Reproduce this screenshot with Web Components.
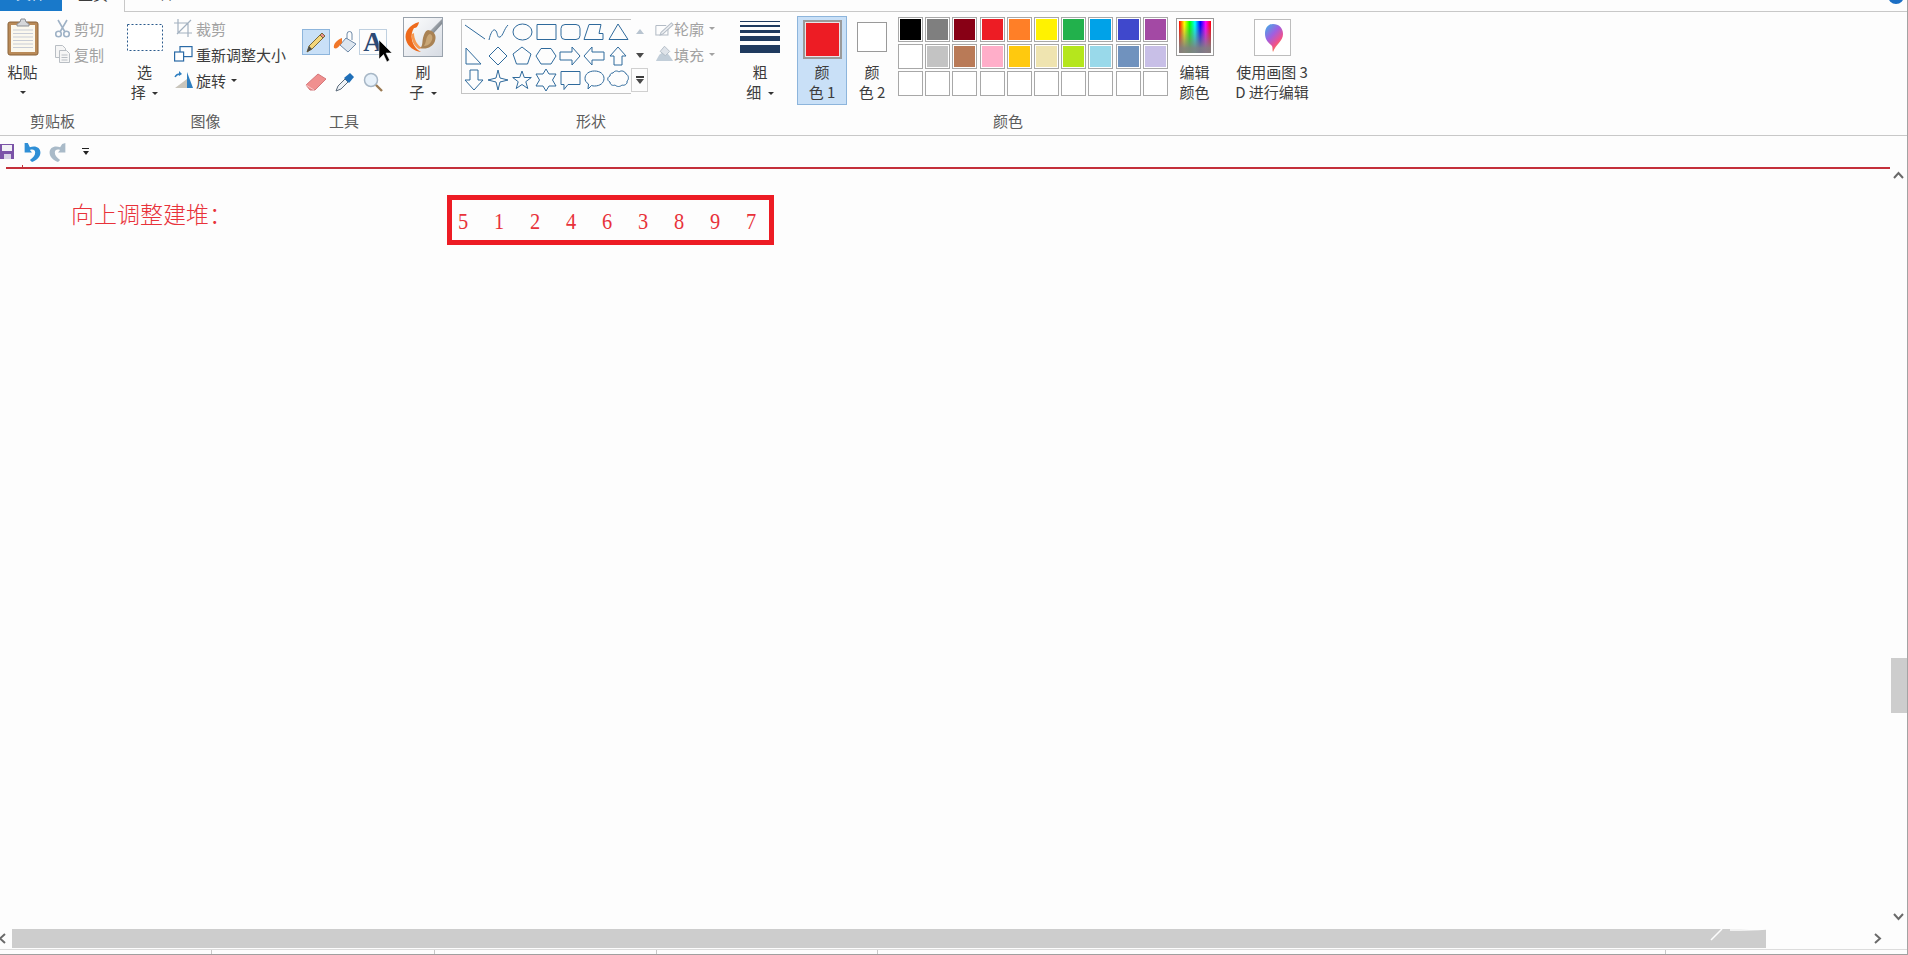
<!doctype html>
<html lang="zh">
<head>
<meta charset="utf-8">
<title>画图</title>
<style>
  html, body { margin: 0; height: 100%; overflow: hidden; background: #fdfdfd; }
  body { font-family: "Noto Sans CJK SC", "Noto Sans", sans-serif; }
</style>
</head>
<body>
<paint-app>
  <paint-tabs></paint-tabs>
  <paint-ribbon>
    <rb-group label="剪贴板" width="120" label-pad="15">
      <rb-big width="45" caret-line="3">
        <svg slot="icon" width="32" height="38" viewBox="0 0 32 38">
          <rect x="1" y="4" width="30" height="33" rx="2" fill="#b98a58" stroke="#8a6238"/>
          <rect x="4" y="7" width="24" height="27" fill="#fbf8ee"/>
          <path d="M6 12h20M6 15.500h20M6 19h20M6 22.500h20M6 26h20M6 29.500h20" stroke="#c9cdd6"/>
          <path d="M10 6l3-2 1-3h4l1 3 3 2v2H10z" fill="#d5d7da" stroke="#8c8f94"/>
        </svg>
        粘贴
      </rb-big>
      <rb-col style="margin-left:10px">
        <rb-small disabled>
          <svg slot="icon" width="15" height="19" viewBox="0 0 15 19" fill="none" stroke="#9fb2c6" stroke-width="1.600">
            <path d="M3 1l7 12M12 1L5 13"/><circle cx="3.500" cy="15" r="2.800"/><circle cx="11.500" cy="15" r="2.800"/>
          </svg>
          剪切
        </rb-small>
        <rb-small disabled>
          <svg slot="icon" width="15" height="18" viewBox="0 0 15 18" fill="#f6f6f6" stroke="#b9bec4">
            <path d="M.5.500h7l3 3v9H.5z"/><path d="M4.500 5.500h7l3 3v9h-10z"/><path d="M6.500 10h6M6.500 12.500h6M6.500 15h6"/>
          </svg>
          复制
        </rb-small>
      </rb-col>
    </rb-group>

    <rb-group label="图像" width="175" label-pad="4">
      <rb-big width="49" caret-line="2">
        <svg slot="icon" width="36" height="27" viewBox="0 0 36 27">
          <rect x=".5" y=".5" width="35" height="26" fill="#fff" stroke="#2a5a8c" stroke-dasharray="2 2"/>
        </svg>
        选<br>择
      </rb-big>
      <rb-col style="margin-left:5px">
        <rb-small disabled wide>
          <svg slot="icon" width="19" height="18" viewBox="0 0 19 18" fill="none" stroke="#a3b1c0" stroke-width="1.200">
            <path d="M4 0v14h14M0 4h14v14M3 15L17 1"/>
          </svg>
          裁剪
        </rb-small>
        <rb-small wide>
          <svg slot="icon" width="19" height="16" viewBox="0 0 19 16" fill="#fff" stroke="#2a6aa6" stroke-width="1.200">
            <rect x="6" y=".6" width="12" height="10"/><rect x=".6" y="6" width="9" height="9"/>
          </svg>
          重新调整大小
        </rb-small>
        <rb-small wide caret>
          <svg slot="icon" width="20" height="18" viewBox="0 0 20 18">
            <path d="M1 17l12-9v9z" fill="#c9c5bb"/><path d="M13 1l6 16h-6z" fill="#2f7fc0"/>
            <path d="M1 6c1-2 3-3 5-3" fill="none" stroke="#2f7fc0" stroke-width="1.400"/><path d="M5 0l3 3-3 2z" fill="#2f7fc0"/>
          </svg>
          旋转
        </rb-small>
      </rb-col>
    </rb-group>

    <rb-group label="工具" width="98">
      <rb-tools></rb-tools>
    </rb-group>

    <rb-group width="62">
      <rb-big width="60" caret-line="2">
        <svg slot="icon" width="40" height="40" viewBox="0 0 40 40">
          <defs>
            <linearGradient id="brushBg" x1="0" y1="0" x2="1" y2="1"><stop offset="0" stop-color="#fff"/><stop offset="1" stop-color="#d6dbe3"/></linearGradient>
            <linearGradient id="ferrule" x1="0" y1="0" x2="1" y2="1"><stop offset="0" stop-color="#e8ecf0"/><stop offset="1" stop-color="#4a525c"/></linearGradient>
          </defs>
          <rect x=".5" y=".5" width="39" height="39" fill="url(#brushBg)" stroke="#9aa3ad"/>
          <path d="M39 2L27 14l3 3L39 7z" fill="url(#ferrule)"/>
          <path d="M16 5C6 8 1 15 3 23c2 7 8 11 15 12-4-2-8-7-9-12-1-5 0-9 2-12 2 0 4-1 5-6z" fill="#ee6a1c"/>
          <path d="M11 16c0 6 3 12 8 15l-3 1c-5-3-8-9-7-15z" fill="#f79a52"/>
          <path d="M25 13c6 1 9 5 7 11-2 6-9 9-15 7 3-2 2-6 3-10 1-4 2-7 5-8z" fill="#a98254"/>
          <path d="M27 17c3 1 3 5 1 8-2 3-5 4-7 4 2-3 2-7 3-9 1-2 2-3 3-3z" fill="#c9a676"/>
        </svg>
        刷<br>子
      </rb-big>
    </rb-group>

    <rb-group label="形状" width="272">
      <rb-shapes></rb-shapes>
      <rb-col style="margin-left:7px">
        <rb-small disabled caret>
          <svg slot="icon" width="22" height="17" viewBox="0 0 22 17" fill="none" stroke="#b4bcc6" stroke-width="1.200">
            <path d="M1 5h12M1 5v11h14V9"/><path d="M7 13L19 2l2 2L9 15l-3 1z" fill="#eef0f3"/>
          </svg>
          轮廓
        </rb-small>
        <rb-small disabled caret>
          <svg slot="icon" width="22" height="18" viewBox="0 0 22 18">
            <path d="M1 17l4-7 5-4 6 4 5 7z" fill="#c2ced9"/><path d="M11 0l6 6-5 5-6-5z" fill="#dfe4ea" stroke="#aeb8c3"/>
          </svg>
          填充
        </rb-small>
      </rb-col>
    </rb-group>

    <rb-group width="70">
      <rb-big width="66" caret-line="2">
        <svg slot="icon" width="40" height="33" viewBox="0 0 40 33" fill="#1f3a5f">
          <rect y="0" width="40" height="1"/><rect y="4" width="40" height="2"/><rect y="9" width="40" height="3"/><rect y="15" width="40" height="5"/><rect y="24" width="40" height="8"/>
        </svg>
        粗<br>细
      </rb-big>
    </rb-group>

    <rb-group label="颜色" width="422">
      <rb-big width="50" active>
        <rb-swatch slot="icon" color="#ed1c24" size="39"></rb-swatch>
        颜<br>色 1
      </rb-big>
      <rb-big width="50">
        <rb-swatch slot="icon" color="#ffffff" size="30" plain></rb-swatch>
        颜<br>色 2
      </rb-big>
      <rb-palette></rb-palette>
      <rb-big width="51">
        <div slot="icon" style="width:36px;height:36px;box-sizing:border-box;border:2px solid #fff;outline:1px solid #9c9c9c;background:linear-gradient(to bottom,rgba(128,128,128,0) 10%,rgba(128,128,128,.95) 85%),linear-gradient(to right,#f00,#ff0,#0f0,#0ff,#00f,#f0f,#f00)"></div>
        编辑<br>颜色
      </rb-big>
    </rb-group>

    <rb-group width="106">
      <rb-big width="106">
        <svg slot="icon" width="37" height="37" viewBox="0 0 37 37">
          <defs>
            <linearGradient id="dropGrad" x1="0" y1="0" x2=".7" y2="1"><stop offset="0" stop-color="#38b6e8"/><stop offset=".45" stop-color="#a05fe0"/><stop offset=".75" stop-color="#f0508c"/><stop offset="1" stop-color="#f7a21e"/></linearGradient>
          </defs>
          <rect x=".5" y=".5" width="36" height="36" fill="#fff" stroke="#bdbdbd"/>
          <path d="M19 5c6 0 10 4 10 10 0 7-7 10-10 18-1-2 0-4-1-6-3-3-7-6-7-12 0-6 3-10 8-10z" fill="url(#dropGrad)"/>
        </svg>
        使用画图 3<br>D 进行编辑
      </rb-big>
    </rb-group>
  </paint-ribbon>
  <paint-qat></paint-qat>
  <paint-canvas heading="向上调整建堆：" digits="5 1 2 4 6 3 8 9 7"></paint-canvas>
  <paint-hscroll></paint-hscroll>
  <paint-status></paint-status>
</paint-app>

<script>
// Small helper, every element here just stamps its markup in an open shadow root
class Base extends HTMLElement {
  constructor() {
    super();
    this.attachShadow({ mode: 'open' }).innerHTML = this.render();
  }
  render() { return ''; }
}

class PaintApp extends Base {
  render() {
    return `<style>
      :host { display: flex; flex-direction: column; height: 100vh; box-sizing: border-box;
        border-right: 1px solid #a3a3a3; color: #3c3c3c; background: #fdfdfd; }
    </style><slot></slot>`;
  }
}

class PaintTabs extends Base {
  render() {
    return `<style>
      :host { display: flex; height: 12px; overflow: hidden; box-sizing: border-box; font-size: 15px; }
      .tab { flex: none; display: flex; justify-content: center; align-items: flex-end; height: 12px; box-sizing: border-box; line-height: 20px; }
      .tab span { margin-bottom: 8px; }
      .file { width: 62px; background: #1979ca; color: #fff; height: 11px; }
      .home { width: 63px; background: #fdfdfd; border-right: 1px solid #c8c8c8; }
      .view { width: 66px; border-bottom: 1px solid #c8c8c8; }
      .rest { flex: 1; border-bottom: 1px solid #c8c8c8; display: flex; justify-content: flex-end; }
      .help { width: 16px; height: 16px; margin: -12px 3px 0 0; border-radius: 50%; background: #1c6fc4; }
    </style>
    <div class="tab file"><span>文件</span></div>
    <div class="tab home"><span>主页</span></div>
    <div class="tab view"><span>查看</span></div>
    <div class="rest"><div class="help"></div></div>`;
  }
}

class PaintRibbon extends Base {
  render() {
    return `<style>
      :host { display: flex; height: 124px; box-sizing: border-box; border-bottom: 1px solid #c8c8c8; }
    </style><slot></slot>`;
  }
}

class RbGroup extends Base {
  render() {
    return `<style>
      :host { display: flex; flex-direction: column; flex: none; height: 123px; width: ${this.getAttribute('width')}px; }
      .body { display: flex; height: 100px; align-items: flex-start; }
      .label { height: 23px; line-height: 18px; text-align: center; font-size: 15px; color: #5c5c5c;
        padding-right: ${this.getAttribute('label-pad') || 0}px; }
    </style>
    <div class="body"><slot></slot></div>
    <div class="label">${this.getAttribute('label') || ''}</div>`;
  }
}

const CARET = '<i class="caret"></i>';

class RbBig extends Base {
  render() {
    const active = this.hasAttribute('active');
    return `<style>
      :host { display: block; flex: none; width: ${this.getAttribute('width')}px; }
      .box { height: ${active ? 89 : 91}px; margin-top: ${active ? 4 : 0}px; box-sizing: border-box;
        ${active ? 'background: #c9e0f7; box-shadow: inset 0 0 0 1px #8db5dc;' : ''} }
      .icon { height: ${active ? 46 : 50}px; padding-bottom: 1px; display: flex; align-items: center; justify-content: center; }
      .text { font-size: 15px; line-height: 20px; text-align: center; white-space: nowrap; margin-top: -1px; }
      .caret { display: inline-block; width: 0; height: 0; margin-left: 3px; vertical-align: 3px;
        border: 3px solid transparent; border-top: 3px solid #333; border-bottom: 0; }
      .third { display: block; height: 20px; }
      .third .caret { margin: 0; vertical-align: 4px; }
    </style>
    <div class="box">
      <div class="icon"><slot name="icon"></slot></div>
      <div class="text"><slot></slot>${this.caretMarkup()}</div>
    </div>`;
  }
  caretMarkup() {
    const line = this.getAttribute('caret-line');
    if (line === '3') return `<span class="third">${CARET}</span>`;
    if (line === '2') return CARET;
    return '';
  }
}

class RbCol extends Base {
  render() {
    return `<style>
      :host { display: flex; flex-direction: column; flex: none; padding-top: 3px; }
    </style><slot></slot>`;
  }
}

class RbSmall extends Base {
  render() {
    const wide = this.hasAttribute('wide');
    const off = this.hasAttribute('disabled');
    return `<style>
      :host { display: flex; align-items: center; height: 26px; font-size: 15px; white-space: nowrap;
        color: ${off ? '#a2a2a2' : '#3c3c3c'}; }
      .icon { flex: none; width: ${wide ? 22 : 19}px; display: flex; }
      .caret { width: 0; height: 0; margin-left: 5px; border: 3px solid transparent;
        border-top: 3px solid ${off ? '#a2a2a2' : '#333'}; border-bottom: 0; }
    </style>
    <div class="icon"><slot name="icon"></slot></div><slot></slot>
    ${this.hasAttribute('caret') ? '<i class="caret"></i>' : ''}`;
  }
}

class RbTools extends Base {
  render() {
    return `<style>
      :host { display: grid; position: relative; flex: none; margin: 17px 0 0 7px;
        grid-template-columns: 28px 29px 28px; grid-auto-rows: 26px; row-gap: 14px; }
      .tool { display: flex; align-items: center; justify-content: center; box-sizing: border-box; }
      .on { background: #c9e0f7; border: 1px solid #8db5dc; }
      .boxed { border: 1px solid #bfd0e0; font: bold 27px/24px "Liberation Serif", serif; color: #2d4a75; }
      .cursor { position: absolute; left: 76px; top: 11px; }
    </style>
    <div class="tool on">
      <svg width="24" height="24" viewBox="0 0 24 24">
        <path d="M3 22l2-6L18 3l3 3L8 19z" fill="#f4d67a" stroke="#7a6a3a"/>
        <path d="M18 3l3 3-2 2-3-3z" fill="#e98f8f" stroke="#7a6a3a"/><path d="M3 22l2-6 3 3z" fill="#4a4a4a"/>
      </svg>
    </div>
    <div class="tool">
      <svg width="26" height="24" viewBox="0 0 26 24">
        <path d="M14 8l10 6-8 8-8-7z" fill="#dde6ef" stroke="#6f8aa8"/>
        <path d="M15 9V4a2.500 2.500 0 0 1 5 0v6" fill="none" stroke="#6f8aa8"/>
        <path d="M10 8c-5 2-9 6-8 10 2 1 4 0 6-3l2-2z" fill="#f0772a"/>
      </svg>
    </div>
    <div class="tool boxed">A</div>
    <div class="tool">
      <svg width="22" height="18" viewBox="0 0 22 18">
        <path d="M1 12L13 1l8 5-11 11H5z" fill="#f0908f" stroke="#d4777a"/><path d="M1 12l8 5" stroke="#fff" stroke-opacity=".5"/>
      </svg>
    </div>
    <div class="tool">
      <svg width="20" height="20" viewBox="0 0 20 20">
        <path d="M1 19l2-5 7-7 3 3-7 7z" fill="#eef2f6" stroke="#5a6a7a"/>
        <path d="M9 6l6-5 4 4-5 6z" fill="#1f6fb8"/>
      </svg>
    </div>
    <div class="tool">
      <svg width="20" height="20" viewBox="0 0 20 20">
        <circle cx="8" cy="8" r="6.500" fill="#e7f1fa" stroke="#a7b7c6" stroke-width="1.500"/>
        <path d="M13 13l6 6" stroke="#9b7a52" stroke-width="2.400"/>
      </svg>
    </div>
    <svg class="cursor" width="15" height="23" viewBox="0 0 15 23">
      <path d="M1 0l13 13H8l3.500 7-2.500 2-3.500-7.500L1 19z" fill="#000" stroke="#fff" stroke-width=".5"/>
    </svg>`;
  }
}

// outlines of the 21 gallery shapes, in a 24x24 cell
const SHAPES = [
  'M3 5l20 14',
  'M3 20c2-9 5-12 7-9s1 7 4 6 4-8 8-12',
  'M3 12a9.500 8 0 1 0 19 0a9.500 8 0 1 0-19 0z',
  'M3 4.500h19v15H3z',
  'M7 4.500h11q4 0 4 4v7q0 4-4 4H7q-4 0-4-4v-7q0-4 4-4z',
  'M7 4.500h12l-2 9h4v6H2z',
  'M12 4L22 19.500H3z',
  'M4 4v16h15z',
  'M12 3l9 9-9 9-9-9z',
  'M12 3l9 7-3.500 10h-11L3 10z',
  'M7 4.500h10L22 12l-5 8H7l-5-8z',
  'M2 8h12V3l8 9-8 9v-5H2z',
  'M22 8H10V3l-8 9 8 9v-5h12z',
  'M4 12l8-9 8 9h-4v9H8v-9z',
  'M8 2h8v10h5l-9 10-9-10h5z',
  'M12 2l2 8 8 2-8 2-2 8-2-8-8-2 8-2z',
  'M12 3l2.300 6.500h7l-5.500 4.200 2 6.800L12 16.500l-5.800 4 2-6.800-5.500-4.200h7z',
  'M12 1l3 5h7l-3.500 6 3.500 6h-7l-3 5-3-5H2l3.500-6L2 6h7z',
  'M3 3.500h19v13H10l-4 5v-5H3z',
  'M12.500 3c5.500 0 9.500 3 9.500 7.500S18 18 12.500 18c-1 0-2 0-3-.5L6 21l.5-5C4 14.500 3 12.500 3 10.500 3 6 7 3 12.500 3z',
  'M7 5c2-3 5-2 6-1 2-2 6-1 7 2 3 1 3 6 1 7 1 3-3 5-5 4-2 2-5 2-7 0-2 1-5 0-5-3-3-1-3-5 0-6 0-2 1-3 3-3z',
];

class RbShapes extends Base {
  render() {
    const cells = SHAPES.map(d => `<svg width="24" height="24" viewBox="0 0 24 24"><path d="${d}"/></svg>`).join('');
    return `<style>
      :host { display: flex; flex: none; margin: 7px 0 0 6px; }
      .gallery { width: 170px; height: 75px; box-sizing: border-box; border: 1px solid #c4c4c4; border-right: 0;
        display: grid; grid-template-columns: repeat(7, 24px); grid-auto-rows: 24px; overflow: hidden; }
      svg { display: block; fill: none; stroke: #2f6a9c; stroke-width: 1; }
      .scroll { width: 17px; height: 73px; display: flex; flex-direction: column; align-items: center; }
      .scroll div { display: flex; align-items: center; justify-content: center; width: 17px; box-sizing: border-box; }
      .up { height: 24px; } .down { height: 25px; }
      .more { height: 24px; border: 1px solid #d0d0d0; flex-direction: column; }
      .tri-up { border: 4px solid transparent; border-bottom: 5px solid #b8c4d0; border-top: 0; }
      .tri-down { border: 4px solid transparent; border-top: 5px solid #4a4a4a; border-bottom: 0; }
      .bar { width: 8px; height: 2px; background: #3c3c3c; margin-bottom: 1px; }
    </style>
    <div class="gallery">${cells}</div>
    <div class="scroll">
      <div class="up"><i class="tri-up"></i></div>
      <div class="down"><i class="tri-down"></i></div>
      <div class="more"><i class="bar"></i><i class="tri-down"></i></div>
    </div>`;
  }
}

class RbSwatch extends Base {
  render() {
    const size = this.getAttribute('size');
    const plain = this.hasAttribute('plain');
    return `<style>
      :host { display: block; box-sizing: border-box; width: ${size}px; height: ${size}px;
        border: 1px solid #9a9a9a; ${plain ? '' : 'border-width: 2px; padding: 1px; background: #e9e3e6;'} }
      div { width: 100%; height: 100%; background: ${this.getAttribute('color')}; }
    </style><div></div>`;
  }
}

const PALETTE = [
  '#000000', '#7f7f7f', '#880015', '#ed1c24', '#ff7f27', '#fff200', '#22b14c', '#00a2e8', '#3f48cc', '#a349a4',
  '#ffffff', '#c3c3c3', '#b97a57', '#ffaec9', '#ffc90e', '#efe4b0', '#b5e61d', '#99d9ea', '#7092be', '#c8bfe7',
  '', '', '', '', '', '', '', '', '', '',
];

class RbPalette extends Base {
  render() {
    const cells = PALETTE.map(c => `<div class="cell"><div style="background:${c || '#fff'}"></div></div>`).join('');
    return `<style>
      :host { display: grid; flex: none; width: 271px; margin: 5px 0 0 1px;
        grid-template-columns: repeat(10, 25px); column-gap: 2.200px; grid-auto-rows: 25px; row-gap: 2px; }
      .cell { box-sizing: border-box; border: 1px solid #a8a8a8; padding: 1px; background: #fff; }
      .cell div { width: 100%; height: 100%; }
    </style>${cells}`;
  }
}

class PaintQat extends Base {
  render() {
    return `<style>
      :host { display: flex; align-items: center; height: 31px; flex: none; }
      svg { display: block; flex: none; }
      .undo { margin-left: 8px; } .redo { margin-left: 8px; }
      .menu { margin-left: 15px; display: flex; flex-direction: column; align-items: center; }
      .bar { width: 7px; height: 1px; background: #222; margin-bottom: 2px; }
      .tri { border: 3px solid transparent; border-top: 4px solid #222; border-bottom: 0; }
    </style>
    <svg width="15" height="15" viewBox="0 0 15 15">
      <path d="M0 0h14v15H0z" fill="#7b54a8"/><path d="M2 1h10v6H2z" fill="#f2f2f6"/><path d="M4 10h7v5H4z" fill="#d8d4e6"/>
    </svg>
    <svg class="undo" width="18" height="20" viewBox="0 0 16 19">
      <path d="M1 1v9h7L6 7.500c3-1 5 0 5 2.500 0 3-2 5-5 7l2 2c5-2 8-5 8-9 0-5-5-7-10-5L4 1z" fill="#2f8fd6"/>
    </svg>
    <svg class="redo" width="18" height="20" viewBox="0 0 16 19">
      <path d="M15 1v9H8l2-2.500c-3-1-5 0-5 2.500 0 3 2 5 5 7l-2 2c-5-2-8-5-8-9 0-5 5-7 10-5l2-3z" fill="#a9bac8"/>
    </svg>
    <div class="menu"><i class="bar"></i><i class="tri"></i></div>`;
  }
}

class PaintCanvas extends Base {
  render() {
    const digits = this.getAttribute('digits').split(' ').map(d => `<span>${d}</span>`).join('');
    return `<style>
      :host { display: flex; flex: 1; min-height: 0; }
      .page { flex: 1; min-width: 0; }
      .rule { height: 2px; margin-left: 6px; background: #c4303a; position: relative; }
      .rule::before { content: ""; position: absolute; left: 16px; top: -2px; width: 1px; height: 2px; background: #c4303a; }
      .row { display: flex; align-items: flex-start; padding: 26px 0 0 71px; color: #ed1c24; }
      h1 { margin: 3px 0 0; width: 376px; flex: none; font: 300 23px/30px "Noto Sans CJK TC", "Noto Sans CJK SC", sans-serif; color: #e8323a; }
      .box { flex: none; display: flex; gap: 24px; width: 327px; height: 50px; box-sizing: border-box;
        border: 5px solid #ed1c24; padding: 2px 0 0 5px; font: 24px/38px "Liberation Serif", serif; }
      .box span { width: 12px; text-align: center; transform: scaleX(.85); color: #e8323a; }
      .vbar { flex: none; width: 17px; display: flex; flex-direction: column; align-items: flex-end; }
      .arrow { width: 17px; display: flex; justify-content: center; }
      .up { margin-top: 3px; }
      .thumb { width: 16px; height: 55px; margin-top: 478px; background: #cdcdcd; }
      .grow { flex: 1; }
      .down { margin-bottom: 7px; }
      path { fill: none; stroke: #6a6a6a; stroke-width: 2; }
    </style>
    <div class="page">
      <div class="rule"></div>
      <div class="row">
        <h1>${this.getAttribute('heading')}</h1>
        <div class="box">${digits}</div>
      </div>
    </div>
    <div class="vbar">
      <div class="arrow up"><svg width="11" height="10" viewBox="0 0 11 10"><path d="M1 8l4.500-5L10 8"/></svg></div>
      <div class="thumb"></div>
      <div class="grow"></div>
      <div class="arrow down"><svg width="11" height="10" viewBox="0 0 11 10"><path d="M1 2l4.500 5L10 2"/></svg></div>
    </div>`;
  }
}

class PaintHscroll extends Base {
  render() {
    return `<style>
      :host { display: flex; flex: none; height: 19px; align-items: center; position: relative; }
      .left { width: 12px; flex: none; }
      .thumb { width: 1754px; height: 19px; flex: none; background: #cdcdcd; }
      .right { margin-left: 108px; }
      svg { display: block; }
      path { fill: none; stroke: #6a6a6a; stroke-width: 2; }
      .mark { position: absolute; left: 1708px; top: 0; }
      .mark path { stroke: #fdfdfd; stroke-width: 1.500; }
    </style>
    <div class="left"><svg width="6" height="11" viewBox="0 0 6 11"><path d="M5 1L0 5.500 5 10"/></svg></div>
    <div class="thumb"></div>
    <svg class="right" width="8" height="11" viewBox="0 0 8 11"><path d="M1 1l5 4.500L1 10"/></svg>
    <svg class="mark" width="60" height="12" viewBox="0 0 60 12"><path d="M3 11L14 0M22 1c8 0 22 0 36-1"/></svg>`;
  }
}

class PaintStatus extends Base {
  render() {
    const cells = [212, 223, 222, 221, 788].map(w => `<div style="width:${w}px"></div>`).join('');
    return `<style>
      :host { display: flex; flex: none; height: 7px; box-sizing: border-box; padding-top: 1px; background: #fdfdfd; }
      .inner { flex: 1; display: flex; border-top: 1px solid #dcdcdc; border-bottom: 1px solid #a0a0a0; }
      .inner div { box-sizing: border-box; border-right: 1px solid #c8c8c8; flex: none; }
    </style><div class="inner">${cells}</div>`;
  }
}

customElements.define('paint-app', PaintApp);
customElements.define('paint-tabs', PaintTabs);
customElements.define('paint-ribbon', PaintRibbon);
customElements.define('rb-group', RbGroup);
customElements.define('rb-big', RbBig);
customElements.define('rb-col', RbCol);
customElements.define('rb-small', RbSmall);
customElements.define('rb-tools', RbTools);
customElements.define('rb-shapes', RbShapes);
customElements.define('rb-swatch', RbSwatch);
customElements.define('rb-palette', RbPalette);
customElements.define('paint-qat', PaintQat);
customElements.define('paint-canvas', PaintCanvas);
customElements.define('paint-hscroll', PaintHscroll);
customElements.define('paint-status', PaintStatus);
</script>
</body>
</html>
